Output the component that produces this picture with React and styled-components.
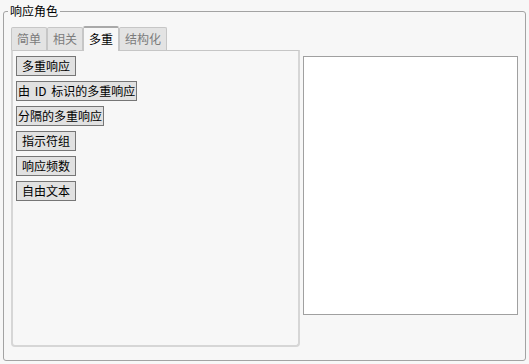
import React from "react";
import styled, { createGlobalStyle } from "styled-components";

const Global = createGlobalStyle`
  html, body {
    margin: 0;
    padding: 0;
    background: #f7f7f7;
    font-family: "Noto Sans CJK SC", "Noto Sans", sans-serif;
  }
`;

const Page = styled.div`
  width: 529px;
  height: 364px;
  box-sizing: border-box;
  padding: 11px 3px 0 3px;
`;

const Frame = styled.div`
  box-sizing: border-box;
  width: 523px;
  height: 350px;
  border: 1px solid #a3a3a3;
  border-radius: 3px;
  padding: 0 7px;
  display: flex;
  flex-direction: column;
`;

const Legend = styled.div`
  align-self: flex-start;
  margin: -9px 0 0 -3px;
  padding: 0 2px;
  background: #f7f7f7;
  font-size: 12px;
  line-height: 16px;
  color: #000;
`;

const Body = styled.div`
  display: flex;
  gap: 3px;
  margin-top: 6px;
`;

const TabWidget = styled.div`
  width: 289px;
  height: 322px;
  display: flex;
  flex-direction: column;
`;

const TabRow = styled.div`
  display: flex;
  align-items: flex-end;
  height: 25px;
`;

const Tab = styled.div`
  box-sizing: border-box;
  height: ${(p) => (p.$active ? 25 : 23)}px;
  padding: 0 5px;
  border: 1px solid #c6c6c6;
  border-top: ${(p) => (p.$active ? "2px solid #a9a9a9" : "1px solid #c6c6c6")};
  border-bottom: none;
  border-radius: 2px 2px 0 0;
  background: ${(p) => (p.$active ? "#f7f7f7" : "#e3e3e3")};
  color: ${(p) => (p.$active ? "#000" : "#7b7b7b")};
  font-size: 12px;
  line-height: ${(p) => (p.$active ? 22 : 21)}px;
  white-space: nowrap;
  position: relative;
  z-index: ${(p) => (p.$active ? 1 : 0)};
  margin-bottom: ${(p) => (p.$active ? -1 : 0)}px;
`;

const Panel = styled.div`
  flex: 1;
  box-sizing: border-box;
  border: 2px solid #d6d6d6;
  border-top: 1px solid #c6c6c6;
  border-radius: 0 0 4px 4px;
  padding: 5px 3px;
  display: flex;
  flex-direction: column;
  align-items: flex-start;
  gap: 5px;
`;

const RoleButton = styled.button`
  box-sizing: border-box;
  height: 20px;
  min-width: 60px;
  padding: 0 1px;
  margin: 0;
  border: 1px solid #767676;
  border-radius: 0;
  background: #e1e1e1;
  color: #000;
  font-family: "Noto Sans CJK SC", "Noto Sans", sans-serif;
  font-size: 12px;
  line-height: 18px;
  word-spacing: 2px;
  white-space: nowrap;
  text-align: center;
`;

const ListBox = styled.div`
  box-sizing: border-box;
  width: 215px;
  height: 259px;
  margin-top: 31px;
  border: 1px solid #a0a0a0;
  background: #fff;
`;

const tabs = ["简单", "相关", "多重", "结构化"];
const buttons = [
  "多重响应",
  "由 ID 标识的多重响应",
  "分隔的多重响应",
  "指示符组",
  "响应频数",
  "自由文本",
];

export default function App() {
  return (
    <>
      <Global />
      <Page>
        <Frame>
          <Legend>响应角色</Legend>
          <Body>
            <TabWidget>
              <TabRow>
                {tabs.map((t) => (
                  <Tab key={t} $active={t === "多重"}>
                    {t}
                  </Tab>
                ))}
              </TabRow>
              <Panel>
                {buttons.map((b) => (
                  <RoleButton key={b}>{b}</RoleButton>
                ))}
              </Panel>
            </TabWidget>
            <ListBox />
          </Body>
        </Frame>
      </Page>
    </>
  );
}
